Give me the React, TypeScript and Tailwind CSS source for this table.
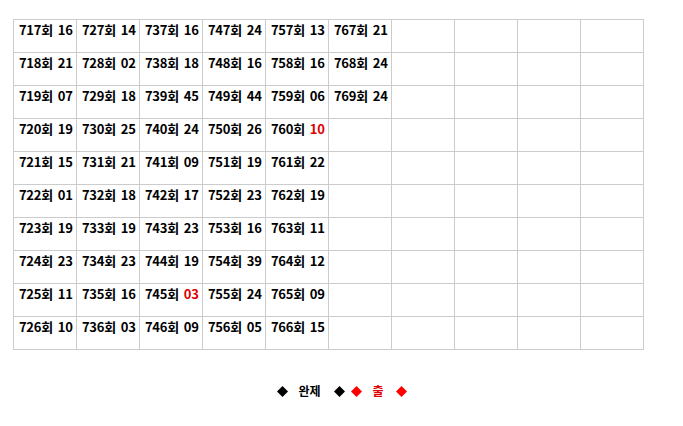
import React from "react";

type Cell = { n: number; v: string; red?: boolean } | null;

const cols: [number, string, boolean?][][] = [
  [[717,"16"],[718,"21"],[719,"07"],[720,"19"],[721,"15"],[722,"01"],[723,"19"],[724,"23"],[725,"11"],[726,"10"]],
  [[727,"14"],[728,"02"],[729,"18"],[730,"25"],[731,"21"],[732,"18"],[733,"19"],[734,"23"],[735,"16"],[736,"03"]],
  [[737,"16"],[738,"18"],[739,"45"],[740,"24"],[741,"09"],[742,"17"],[743,"23"],[744,"19"],[745,"03",true],[746,"09"]],
  [[747,"24"],[748,"16"],[749,"44"],[750,"26"],[751,"19"],[752,"23"],[753,"16"],[754,"39"],[755,"24"],[756,"05"]],
  [[757,"13"],[758,"16"],[759,"06"],[760,"10",true],[761,"22"],[762,"19"],[763,"11"],[764,"12"],[765,"09"],[766,"15"]],
  [[767,"21"],[768,"24"],[769,"24"]],
];

function Diamond({ color }: { color: string }) {
  return (
    <svg width="11" height="11" viewBox="0 0 11 11" className="shrink-0">
      <polygon points="5.5,0 11,5.5 5.5,11 0,5.5" fill={color} />
    </svg>
  );
}

export default function App() {
  const rows: Cell[][] = [];
  for (let r = 0; r < 10; r++) {
    const row: Cell[] = [];
    for (let c = 0; c < 10; c++) {
      const d = cols[c]?.[r];
      row.push(d ? { n: d[0], v: d[1], red: d[2] } : null);
    }
    rows.push(row);
  }
  return (
    <div
      className="w-[683px] h-[426px] bg-white pt-[19px]"
      style={{ fontFamily: '"Noto Sans CJK KR", "Noto Sans", sans-serif' }}
    >
      <div className="ml-[13px] grid grid-cols-[repeat(10,63px)] w-[631px] border-l border-t border-[#cccccc]">
        {rows.flat().map((cell, i) => (
          <div
            key={i}
            className="h-[33px] border-r border-b border-[#cccccc] pl-[5px] pt-[1px] text-[13px] tracking-[-0.3px] leading-[18px] font-bold text-black whitespace-nowrap"
          >
            {cell && (
              <>
                {cell.n}회<span className={"ml-[5px] " + (cell.red ? "text-[#e00000]" : "")}>{cell.v}</span>
              </>
            )}
          </div>
        ))}
      </div>
      <div className="w-[683px] flex justify-center items-center mt-[32px] text-[12px] font-bold leading-[18px] pl-[1px]">
        <Diamond color="#000000" />
        <span className="ml-[10px] text-black">완제</span>
        <span className="ml-[13px]"><Diamond color="#000000" /></span>
        <span className="ml-[6px]"><Diamond color="#ff0000" /></span>
        <span className="ml-[11px] text-[#e00000]">출</span>
        <span className="ml-[12px]"><Diamond color="#ff0000" /></span>
      </div>
    </div>
  );
}
